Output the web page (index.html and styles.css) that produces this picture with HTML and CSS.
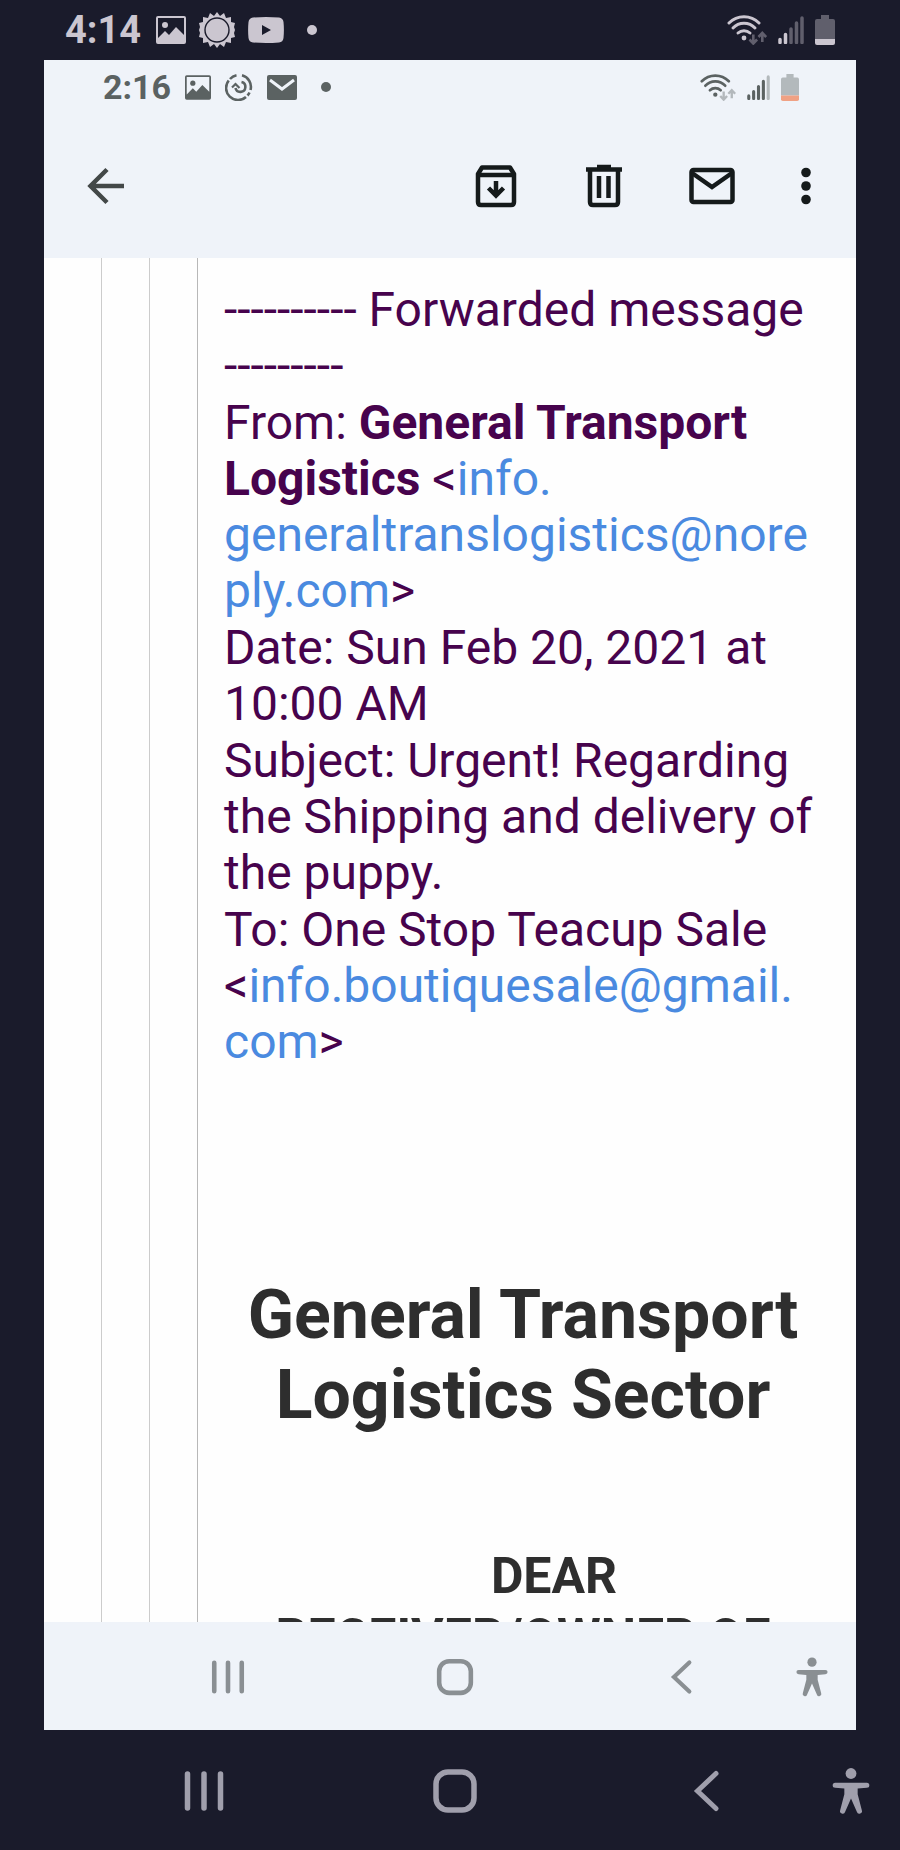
FILE: index.html
```html
<!DOCTYPE html>
<html lang="en">

<head>
    <meta charset="utf-8">
    <meta name="viewport" content="width=device-width, initial-scale=1">
    <title>Forwarded message</title>
    <link rel="stylesheet" href="styles.css">
</head>

<body>
    <!-- shared icons -->
    <svg class="sprite" aria-hidden="true">
        <symbol id="picture" viewBox="0 0 30 28">
            <path fill="currentColor" fill-rule="evenodd" d="M2 0h26a2 2 0 0 1 2 2v24a2 2 0 0 1-2 2H2a2 2 0 0 1-2-2V2a2 2 0 0 1 2-2zM2 2v20l7-7 4 4 7-8 8 8V2z" />
            <circle cx="9" cy="9" r="3" fill="currentColor" />
        </symbol>
        <symbol id="wifi" viewBox="0 0 40 30">
            <g fill="none" stroke="currentColor" stroke-width="3" stroke-linecap="round">
                <path d="M2 8a21 21 0 0 1 30 0" />
                <path d="M6 13a15 15 0 0 1 22 0" />
                <path d="M11 18a9 9 0 0 1 12 0" />
            </g>
            <circle cx="17" cy="23" r="2.4" fill="currentColor" />
            <g class="faint" fill="none" stroke="currentColor" stroke-width="2.6">
                <path d="M26.3 19.500v9M22.500 24.500l3.800 4 3.800-4" />
                <path d="M35.300 27v-9M31.500 22l3.800-4 3.800 4" />
            </g>
        </symbol>
        <symbol id="recents" viewBox="0 0 48 48">
            <path d="M7.500 7v34M24 7v34M40.500 7v34" fill="none" stroke="currentColor" stroke-width="5.500" stroke-linecap="round" />
        </symbol>
        <symbol id="home" viewBox="0 0 48 48">
            <rect x="5" y="5" width="38" height="38" rx="12" fill="none" stroke="currentColor" stroke-width="5.500" />
        </symbol>
        <symbol id="back" viewBox="0 0 48 48">
            <path d="M34 6.500L15.500 24 34 41.500" fill="none" stroke="currentColor" stroke-width="5" stroke-linecap="round" />
        </symbol>
        <symbol id="person" viewBox="0 0 48 56">
            <circle cx="24" cy="7" r="6.500" fill="currentColor" />
            <path d="M5 18h38a3 3 0 0 1 0 6l-11 1v7l5 19a3 3 0 0 1-6 2l-7-16-7 16a3 3 0 0 1-6-2l5-19v-7L5 24a3 3 0 0 1 0-6z" fill="currentColor" />
        </symbol>
    </svg>

    <div class="phone">
        <div class="status">
            <span class="time">4:14</span>
            <svg width="30" height="28"><use href="#picture" /></svg>
            <svg width="36" height="36" viewBox="0 0 36 36">
                <path fill="currentColor" d="M18 0l3 4 4-3 2 5 5-1v5l4 1-1 4 1 3-1 3 1 4-4 1v5l-5-1-2 5-4-3-3 4-3-4-4 3-2-5-5 1v-5l-4-1 1-4-1-3 1-3-1-4 4-1V5l5 1 2-5 4 3z" />
                <circle cx="18" cy="18" r="12" fill="none" stroke="#1a1b2b" stroke-width="1.400" />
            </svg>
            <svg width="36" height="26" viewBox="0 0 36 26">
                <path fill="currentColor" fill-rule="evenodd" d="M5 .5q13-1 26 0 4 .5 4.500 4.500.8 8 0 16-.5 4-4.500 4.500-13 1-26 0-4-.5-4.500-4.500-.8-8 0-16Q1 1 5 .5zM14 8v10l9-5z" />
            </svg>
            <span class="dot"></span>
            <span class="levels">
                <svg width="40" height="30"><use href="#wifi" /></svg>
                <svg width="26" height="28" viewBox="0 0 26 28" fill="none" stroke="currentColor" stroke-width="3.500" stroke-linecap="round">
                    <path d="M2 23.500v3M7.500 18.500v8" />
                    <path class="faint" d="M13 13v13.500M18.500 7v19.500M24 2v24.500" />
                </svg>
                <svg width="20" height="30" viewBox="0 0 20 30" fill="currentColor">
                    <path class="faint" d="M6 0h8v4h4q2 0 2 2v18H0V6q0-2 2-2h4z" />
                    <path d="M0 24h20v4q0 2-2 2H2q-2 0-2-2z" />
                </svg>
            </span>
        </div>

        <div class="screen">
            <div class="status inner">
                <span class="time">2:16</span>
                <svg width="26" height="25"><use href="#picture" /></svg>
                <svg width="28" height="28" viewBox="0 0 28 28" fill="none" stroke="currentColor" stroke-width="2.600">
                    <path d="M11.500 2.300A12 12 0 0 0 5 6M3.700 7.500A12 12 0 0 0 21 24" />
                    <path d="M17 2.300A12 12 0 0 1 25.500 17M24.500 19.500a12 12 0 0 1-2 3" />
                    <path d="M16.500 9a5 5 0 1 1-6 6" />
                    <path d="M7 14.500l3.500-3.500 4 4" stroke-width="2.200" />
                </svg>
                <svg width="30" height="25" viewBox="0 0 30 25">
                    <rect width="30" height="25" rx="2" fill="currentColor" />
                    <path d="M3 5l12 9L27 5" fill="none" stroke="#eff3f9" stroke-width="3" />
                </svg>
                <span class="dot"></span>
                <span class="levels">
                    <svg width="36" height="27"><use href="#wifi" /></svg>
                    <svg width="23" height="25" viewBox="0 0 26 28" fill="none" stroke="currentColor" stroke-width="3.500" stroke-linecap="round">
                        <path d="M2 23.500v3M7.500 18.500v8M13 13v13.500M18.500 7v19.500" />
                        <path class="faint" d="M24 2v24.500" />
                    </svg>
                    <svg width="18" height="27" viewBox="0 0 20 30" fill="currentColor">
                        <path class="faint" d="M6 0h8v4h4q2 0 2 2v18H0V6q0-2 2-2h4z" />
                        <path class="low" d="M0 24h20v4q0 2-2 2H2q-2 0-2-2z" />
                    </svg>
                </span>
            </div>

            <div class="toolbar">
                <button class="up" aria-label="Back">
                    <svg width="48" height="48" viewBox="0 0 48 48" fill="none" stroke="currentColor" stroke-width="4.500">
                        <path d="M42 24H9M25 7.500L8.500 24 25 40.500" />
                    </svg>
                </button>
                <button aria-label="Archive">
                    <svg width="48" height="48" viewBox="0 0 48 48" fill="none" stroke="currentColor" stroke-width="4.500">
                        <path d="M6 12l4-6.500h28l4 6.500v28q0 3-3 3H9q-3 0-3-3z" stroke-linejoin="round" />
                        <path d="M6 13h36" />
                        <path d="M24 19v14M16.500 26l7.500 7.500 7.500-7.500" />
                    </svg>
                </button>
                <button aria-label="Delete">
                    <svg width="48" height="48" viewBox="0 0 48 48" fill="none" stroke="currentColor" stroke-width="4.500">
                        <path d="M6 7.500h36M17 5h14" />
                        <path d="M10 8v32q0 3 3 3h22q3 0 3-3V8M19 14v22M28.500 14v22" />
                    </svg>
                </button>
                <button aria-label="Mark as unread">
                    <svg width="48" height="48" viewBox="0 0 48 48" fill="none" stroke="currentColor" stroke-width="4.500">
                        <rect x="3.500" y="8" width="41" height="32" rx="2" />
                        <path d="M4 11l20 14 20-14" />
                    </svg>
                </button>
                <button aria-label="More">
                    <svg width="20" height="48" viewBox="0 0 20 48" fill="currentColor">
                        <circle cx="10" cy="10.500" r="4.800" />
                        <circle cx="10" cy="24" r="4.800" />
                        <circle cx="10" cy="37.500" r="4.800" />
                    </svg>
                </button>
            </div>

            <div class="mail">
                <blockquote>
                    <blockquote>
                        <blockquote class="last">
                            <div class="fields">
                                <div>---------- Forwarded message ---------</div>
                                <div>From: <b>General Transport Logistics</b> &lt;<a href="mailto:info.generaltranslogistics@noreply.com">info.<wbr>generaltranslogistics@noreply.com</a>&gt;</div>
                                <div>Date: Sun Feb 20, 2021 at 10:00 AM</div>
                                <div>Subject: Urgent! Regarding the Shipping and delivery of the puppy.</div>
                                <div>To: One Stop Teacup Sale &lt;<a href="mailto:info.boutiquesale@gmail.com">info.boutiquesale@gmail.<wbr>com</a>&gt;</div>
                            </div>
                            <h1>General Transport Logistics Sector</h1>
                            <h2>DEAR<br>RECEIVER/OWNER OF</h2>
                        </blockquote>
                    </blockquote>
                </blockquote>
            </div>

            <div class="nav inner">
                <div class="keys">
                    <button aria-label="Recent apps"><svg width="40" height="40"><use href="#recents" /></svg></button>
                    <button aria-label="Home"><svg width="40" height="40"><use href="#home" /></svg></button>
                    <button aria-label="Back"><svg width="40" height="40"><use href="#back" /></svg></button>
                </div>
                <button aria-label="Accessibility"><svg width="34" height="40"><use href="#person" /></svg></button>
            </div>
        </div>

        <div class="nav">
            <div class="keys">
                <button aria-label="Recent apps"><svg width="48" height="48"><use href="#recents" /></svg></button>
                <button aria-label="Home"><svg width="48" height="48"><use href="#home" /></svg></button>
                <button aria-label="Back"><svg width="48" height="48"><use href="#back" /></svg></button>
            </div>
            <button aria-label="Accessibility"><svg width="40" height="48"><use href="#person" /></svg></button>
        </div>
    </div>
</body>

</html>
```

FILE: styles.css
```css
body {
    margin: 0;
    background: #1a1b2b;
    font-family: Roboto, "Liberation Sans", sans-serif;
}

svg {
    display: block;
    flex: none;
}

button {
    margin: 0;
    padding: 0;
    border: 0;
    background: none;
    color: inherit;
    cursor: pointer;
}

a {
    color: #4a8ae0;
    text-decoration: none;
}

.sprite {
    position: absolute;
    width: 0;
    height: 0;
}

.phone {
    display: flex;
    flex-direction: column;
    height: 100vh;
}

/* status bars */
.status {
    display: flex;
    flex: none;
    align-items: center;
    gap: 13px;
    height: 60px;
    padding: 0 65px;
    box-sizing: border-box;
    color: #cbc6d0;
}

.status.inner {
    gap: 14px;
    height: 54px;
    padding: 0 57px 0 59px;
    color: #5b6262;
}

.time {
    font-size: 38px;
    font-weight: bold;
    line-height: 40px;
    margin-right: 2px;
}

.inner .time {
    font-size: 34px;
    margin-right: 0;
}

.dot {
    width: 10px;
    height: 10px;
    margin-left: 10px;
    border-radius: 50%;
    background: currentColor;
}

.levels {
    display: flex;
    align-items: center;
    gap: 11px;
    margin-left: auto;
}

.faint {
    opacity: .4;
}

.low {
    color: #f0a184;
}

/* mail app */
.screen {
    display: flex;
    flex: 1;
    flex-direction: column;
    min-height: 0;
    margin: 0 44px;
    background: #eff3f9;
}

.toolbar {
    display: flex;
    flex: none;
    align-items: center;
    gap: 60px;
    height: 144px;
    padding: 0 40px 0 38px;
    color: #151a1b;
}

.toolbar .up {
    margin-right: auto;
    color: #434848;
}

.mail {
    display: flex;
    flex: 1;
    min-height: 0;
    padding-left: 57px;
    overflow: hidden;
    background: #fefefe;
}

blockquote {
    flex: 1;
    margin: 0;
    padding-left: 47px;
    border-left: 1px solid #ccc;
}

blockquote.last {
    padding: 24px 34px 0 26px;
    border-color: #b8b8b8;
}

.fields {
    display: grid;
    gap: 1px;
    color: #47034d;
    font-size: 48px;
    line-height: 56px;
    overflow-wrap: anywhere;
}

h1,
h2 {
    color: #2e2e2e;
    text-align: center;
}

h1 {
    margin: 205px 0 111px;
    font-size: 68px;
    line-height: 80px;
}

h2 {
    margin: 0;
    font-size: 50px;
    line-height: 61px;
    text-indent: 62px;
}

/* navigation bars */
.nav {
    display: flex;
    flex: none;
    align-items: center;
    gap: 101px;
    height: 120px;
    padding: 2px 29px 0 180px;
    box-sizing: border-box;
    color: #a09fac;
}

.nav.inner {
    gap: 94px;
    height: 108px;
    padding: 2px 27px 0 164px;
    color: #8a8f93;
}

.keys {
    display: flex;
    flex: 1;
    justify-content: space-between;
}
```
